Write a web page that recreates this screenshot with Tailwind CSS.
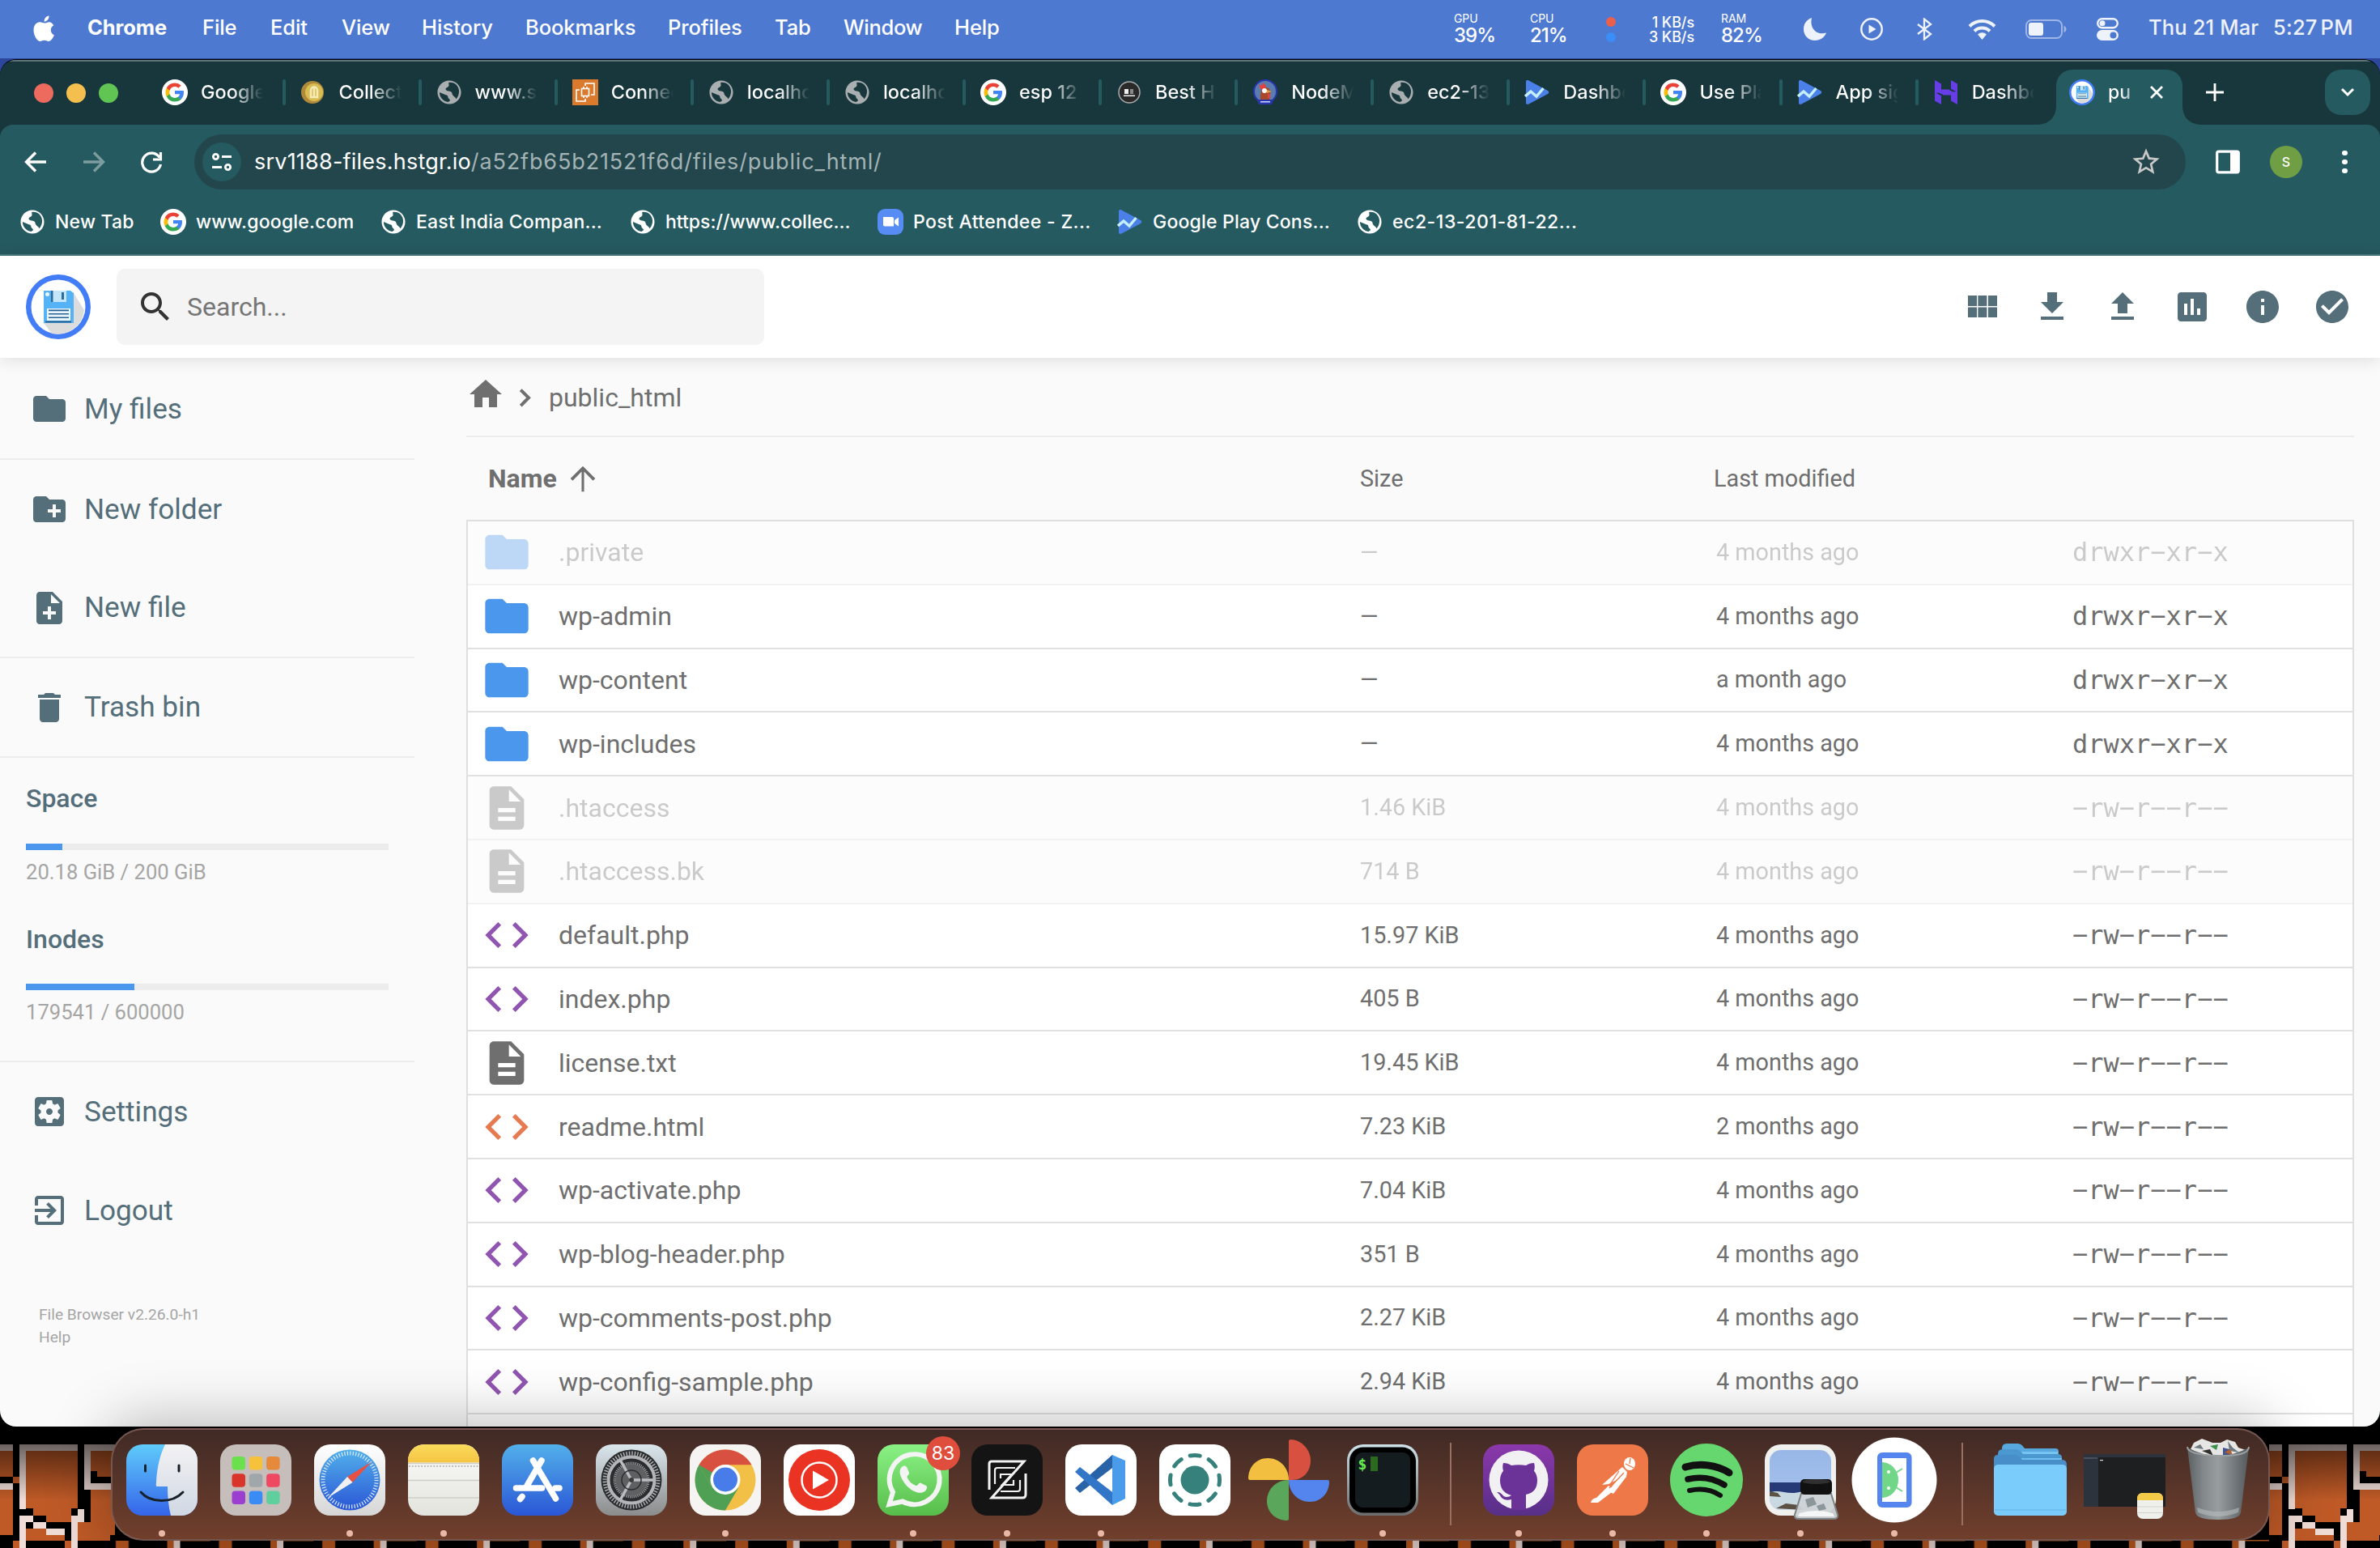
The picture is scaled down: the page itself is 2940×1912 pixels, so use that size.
<!DOCTYPE html>
<html lang="en">
<head>
<meta charset="utf-8">
<title>public_html</title>
<script src="https://cdn.jsdelivr.net/npm/@tailwindcss/browser@4"></script>
</head>
<body class="relative h-[1912px] w-[2940px] overflow-hidden bg-[#2c479c] font-[Inter,sans-serif] text-white">

<!-- shared icons -->
<svg class="absolute h-0 w-0" aria-hidden="true">
  <defs>
    <linearGradient id="gFinder" x1="0" y1="0" x2="0" y2="1"><stop offset="0" stop-color="#5fcbfa"/><stop offset="1" stop-color="#3565ea"/></linearGradient>
    <linearGradient id="gFinder2" x1="0" y1="0" x2="0" y2="1"><stop offset="0" stop-color="#f3f2f3"/><stop offset="1" stop-color="#d0d8e4"/></linearGradient>
    <linearGradient id="gBlue" x1="0" y1="0" x2="0" y2="1"><stop offset="0" stop-color="#52b0ea"/><stop offset="1" stop-color="#2a56d6"/></linearGradient>
    <linearGradient id="gWhite" x1="0" y1="0" x2="0" y2="1"><stop offset="0" stop-color="#ffffff"/><stop offset="1" stop-color="#d6d6d6"/></linearGradient>
    <linearGradient id="gPaper" x1="0" y1="0" x2="0" y2="1"><stop offset="0" stop-color="#fbfbfa"/><stop offset="1" stop-color="#e3e3dd"/></linearGradient>
    <linearGradient id="gYellow" x1="0" y1="0" x2="0" y2="1"><stop offset="0" stop-color="#f9db5c"/><stop offset="1" stop-color="#f6c443"/></linearGradient>
    <linearGradient id="gGear" x1="0" y1="0" x2="0" y2="1"><stop offset="0" stop-color="#dae6ed"/><stop offset="1" stop-color="#8b8c8c"/></linearGradient>
    <linearGradient id="gWa" x1="0" y1="0" x2="0" y2="1"><stop offset="0" stop-color="#8af285"/><stop offset="1" stop-color="#57bd4a"/></linearGradient>
    <linearGradient id="gGh" x1="0" y1="0" x2="0" y2="1"><stop offset="0" stop-color="#8b38ab"/><stop offset="1" stop-color="#572f88"/></linearGradient>
    <linearGradient id="gTerm" x1="0" y1="0" x2="0" y2="1"><stop offset="0" stop-color="#cfe2ea"/><stop offset="1" stop-color="#6d6d6d"/></linearGradient>
    <linearGradient id="gSky" x1="0" y1="0" x2="0" y2="1"><stop offset="0" stop-color="#98b7e6"/><stop offset="1" stop-color="#a9c3ef"/></linearGradient>
    <linearGradient id="gCan" x1="0" y1="0" x2="1" y2="0"><stop offset="0" stop-color="#5b6063"/><stop offset=".25" stop-color="#81878a"/><stop offset=".5" stop-color="#989da0"/><stop offset=".75" stop-color="#757b7e"/><stop offset="1" stop-color="#54595c"/></linearGradient>
    <linearGradient id="gShade" x1="0" y1="0" x2="0" y2="1"><stop offset="0" stop-color="#000" stop-opacity=".9"/><stop offset="1" stop-color="#000" stop-opacity="0"/></linearGradient>
  </defs>
  <symbol id="g" viewBox="0 0 32 32"><circle cx="16" cy="16" r="16" fill="#fff"/><g transform="translate(4 4)"><path fill="#4285f4" d="M23 12.27c0-.82-.07-1.6-.2-2.36H12v4.46h6.17a5.28 5.28 0 0 1-2.29 3.46v2.88h3.7c2.17-2 3.42-4.94 3.42-8.44z"/><path fill="#34a853" d="M12 23.5c3.1 0 5.7-1.03 7.6-2.78l-3.71-2.88c-1.03.69-2.34 1.1-3.89 1.1-2.99 0-5.52-2.02-6.42-4.73H1.75v2.97A11.5 11.5 0 0 0 12 23.5z"/><path fill="#fbbc05" d="M5.58 14.2a6.9 6.9 0 0 1 0-4.4V6.83H1.75a11.5 11.5 0 0 0 0 10.34z"/><path fill="#ea4335" d="M12 5.07c1.69 0 3.2.58 4.39 1.72l3.29-3.29A11.02 11.02 0 0 0 12 .5 11.5 11.5 0 0 0 1.75 6.83L5.58 9.8C6.48 7.09 9.01 5.07 12 5.07z"/></g></symbol>
  <symbol id="globe" viewBox="1 1 22 22"><path fill="currentColor" d="M12 2C6.48 2 2 6.48 2 12s4.48 10 10 10 10-4.48 10-10S17.52 2 12 2zm-1 18.2c-4.1-.49-7.3-3.9-7.3-8.2L9 14.2c1.400.2 1.900.8 1.900 2 0 1.400 1.800 1.500 1.800 2.800zm6.9-2.540c-.5-1.500-2.600-2.200-3.200-3.600-.4-1.100-.2-2.100-1.300-2.600-1.300-.6-2.700-.2-3.900-1.100-1.200-1-.3-2.300 1-2.700 1.500-.4 1.200-2 .9-3.900 4.700-.9 8.700 2.500 8.900 7.200 0 2.600-.8 4.800-2.400 6.700z" fill-rule="evenodd"/></symbol>
  <symbol id="play" viewBox="0 0 32 32"><path fill="#4a80e8" d="M2 3c0-2 2-2.500 3.500-1.500L29 14c1.700 1 1.700 3 0 4L5.500 30.500C4 31.500 2 31 2 29z"/><path fill="none" stroke="#c5f0fb" stroke-width="3.400" d="M1 21l7-6 7 6 8.500-10"/></symbol>
  <symbol id="floppy" viewBox="0 0 80 80"><circle cx="40" cy="40" r="40" fill="#427cf6"/><circle cx="40" cy="40" r="33.500" fill="#fff"/><path fill="#dcdcdc" d="M58.500 22L72 44a33 33 0 0 1-40 29L22 60z"/><path fill="#55b3f5" d="M22 20h33l4 3v37H22z"/><path fill="#c4e6fb" d="M33 20h17v14H33z"/><path fill="#2b6a9c" d="M44 22h3v9h-3zM31 20h2.500v14H31z"/><circle cx="26.500" cy="24.500" r="2.500" fill="#e8f6ff"/><path fill="#e9f5fc" d="M26 42h29v15H26z"/><path fill="#276192" d="M28 43.500h25v1.800H28zM28 48h25v1.600H28zM28 52.500h25v1.600H28zM24 57.500h32v2H24z"/></symbol>
  <symbol id="folder" viewBox="0 0 24 24"><path fill="currentColor" d="M10 4H4c-1.100 0-1.990.9-1.990 2L2 18c0 1.100.9 2 2 2h16c1.100 0 2-.9 2-2V8c0-1.100-.9-2-2-2h-8l-2-2z"/></symbol>
  <symbol id="newfolder" viewBox="0 0 24 24"><path fill="currentColor" d="M20 6h-8l-2-2H4c-1.110 0-1.990.89-1.990 2L2 18c0 1.110.89 2 2 2h16c1.110 0 2-.89 2-2V8c0-1.110-.89-2-2-2zm-1 8h-3v3h-2v-3h-3v-2h3V9h2v3h3v2z"/></symbol>
  <symbol id="newfile" viewBox="0 0 24 24"><path fill="currentColor" d="M14 2H6c-1.100 0-1.990.9-1.990 2L4 20c0 1.100.89 2 1.990 2H18c1.100 0 2-.9 2-2V8l-6-6zm2 14h-3v3h-2v-3H8v-2h3v-3h2v3h3v2zm-3-7V3.500L18.500 9H13z"/></symbol>
  <symbol id="trash" viewBox="0 0 24 24"><path fill="currentColor" d="M6 19c0 1.100.9 2 2 2h8c1.100 0 2-.9 2-2V7H6v12zM19 4h-3.500l-1-1h-5l-1 1H5v2h14V4z"/></symbol>
  <symbol id="settings" viewBox="0 0 24 24"><path fill="currentColor" d="M12 10c-1.100 0-2 .9-2 2s.9 2 2 2 2-.9 2-2-.9-2-2-2zm7-7H5c-1.110 0-2 .9-2 2v14c0 1.100.89 2 2 2h14c1.110 0 2-.9 2-2V5c0-1.100-.89-2-2-2zm-1.750 9c0 .23-.02.46-.05.68l1.480 1.160c.13.11.17.3.08.45l-1.400 2.420c-.09.15-.27.21-.43.150l-1.740-.7c-.36.28-.76.51-1.180.69l-.26 1.850c-.03.170-.18.3-.35.3h-2.800c-.17 0-.32-.13-.35-.29l-.26-1.850c-.43-.18-.82-.41-1.180-.69l-1.740.7c-.16.060-.34 0-.43-.15l-1.400-2.420c-.09-.15-.05-.34.08-.45l1.480-1.160c-.03-.23-.05-.46-.05-.69 0-.23.02-.46.05-.68l-1.480-1.160c-.13-.11-.17-.3-.08-.45l1.400-2.420c.09-.15.27-.21.43-.15l1.740.7c.36-.28.76-.51 1.180-.69l.26-1.850c.03-.17.18-.3.35-.3h2.800c.17 0 .32.13.35.29l.26 1.850c.43.18.82.41 1.180.69l1.740-.7c.16-.06.34 0 .43.15l1.400 2.420c.09.15.05.34-.08.45l-1.480 1.160c.03.230.05.460.05.690z"/></symbol>
  <symbol id="logout" viewBox="0 0 24 24"><path fill="currentColor" d="M10.090 15.590L11.500 17l5-5-5-5-1.410 1.410L12.670 11H3v2h9.670l-2.580 2.590zM19 3H5c-1.110 0-2 .9-2 2v4h2V5h14v14H5v-4H3v4c0 1.100.89 2 2 2h14c1.100 0 2-.9 2-2V5c0-1.100-.9-2-2-2z"/></symbol>
  <symbol id="doc" viewBox="0 0 24 24"><path fill="currentColor" d="M14 2H6c-1.100 0-1.990.9-1.990 2L4 20c0 1.100.89 2 1.990 2H18c1.100 0 2-.9 2-2V8l-6-6zm2 16H8v-2h8v2zm0-4H8v-2h8v2zm-3-5V3.500L18.500 9H13z"/></symbol>
  <symbol id="code" viewBox="0 0 24 24"><path fill="currentColor" d="M9.400 16.600L4.800 12l4.600-4.600L8 6l-6 6 6 6 1.400-1.400zm5.200 0l4.600-4.600-4.600-4.600L16 6l6 6-6 6-1.400-1.400z"/></symbol>
</svg>

<!-- wallpaper -->
<svg class="absolute bottom-0 left-0 h-[170px] w-[2940px]" viewBox="0 1742 2940 170">
  <defs>
    <g id="bricks" shape-rendering="crispEdges">
      <path fill="#000" d="M0 0h292v516H0z"/>
      <path fill="#bf5a27" d="M0 156h34v97H0zM66 156h132v214H66zM231 156h61v97h-61zM34 253h16v24H34zM0 300h34v167H0zM66 370h117v50H66zM231 300h61v190h-61zM66 444h117v46H66zM198 420h94v70h-94zM34 490h32v26H34zM166 490h16v26h-16z"/>
      <path fill="#efdcd6" d="M0 133h34v23H0zM50 133h148v23H66v216H50zM215 133h77v23h-61v144h-16zM0 277h34v23H0zM215 277h77v23h-77zM50 396h34v24h33v24h49v24h-49v-24H84v-24H66v96H50zM198 372h17v48h-17v96h-16V396h16z"/>
      <path fill="#000" d="M231 230h16v23h-16zM66 370h18v26H66zM84 396h33v24H84zM117 420h65v24h-65zM166 444h16v46h-16zM182 370h16v26h-16zM0 467h20v23H0zM280 467h12v23h-12z"/>
      <path fill="url(#gShade)" d="M0 0h292v340H0z"/>
    </g>
    <pattern id="strip" patternUnits="userSpaceOnUse" x="79" y="1900" width="127.540" height="12">
      <path fill="#000" d="M0 0h128v12H0z"/><path fill="#b4551f" d="M0 3h8v9H0zM64 3h16v9H64zM8 2h45v1.500H8z"/><path fill="#e3cfc9" d="M8 3h8v9H8z"/>
    </pattern>
  </defs>
  <path fill="#000" d="M0 1742h2940v170H0z"/>
  <path fill="url(#strip)" d="M130 1900h2680v12H130z"/>
  <use href="#bricks" transform="matrix(.4847 0 0 .3333 0 1740)"/>
  <use href="#bricks" transform="matrix(.4847 0 0 .3333 2803 1740)"/>
</svg>

<div class="relative flex h-[1912px] flex-col">
  <!-- menu bar -->
  <header class="flex h-[72px] shrink-0 items-center bg-[#4e79d1] pb-[3px] text-[25.5px] font-medium tracking-[-0.1px] whitespace-nowrap">
    <svg class="ml-[40px] h-[32px] w-[68px] shrink-0" viewBox="0 0 68 32"><path fill="#fff" d="M20.800 8.200c-2.300 0-4 1.400-5.600 1.400S11.300 8.300 9.300 8.300C5.300 8.300 1.500 11.800 1.500 18.200 1.500 25 6 32 9.500 32c1.900 0 2.900-1.200 5.300-1.200 2.400 0 3.100 1.200 5.200 1.200 3.200 0 5.900-4.800 6.800-7.700-5.200-2.300-5.300-9.500-.5-12-1.300-2.300-3.300-4.100-5.500-4.100zM20.500.5c-3.600.5-6.200 3.800-5.800 7.200 3.400 0 6.200-3.600 5.800-7.200z"/></svg>
    <span class="w-[142px] shrink-0 font-bold">Chrome</span><span class="w-[84px] shrink-0">File</span><span class="w-[88px] shrink-0">Edit</span><span class="w-[99px] shrink-0">View</span><span class="w-[128px] shrink-0 tracking-[0px]">History</span><span class="w-[176px] shrink-0">Bookmarks</span><span class="w-[132px] shrink-0">Profiles</span><span class="w-[85px] shrink-0">Tab</span><span class="w-[137px] shrink-0 tracking-[-0.3px]">Window</span><span class="shrink-0">Help</span>
    <div class="ml-auto flex items-center">
      <div class="w-[94px] leading-none"><div class="mt-[2px] text-[14px] font-normal">GPU</div><div class="mt-[2px] text-[24px] tracking-[-1px]">39%</div></div>
      <div class="w-[94px] leading-none"><div class="mt-[2px] text-[14px] font-normal">CPU</div><div class="mt-[2px] text-[24px] tracking-[-1px]">21%</div></div>
      <div class="mr-[30px] flex w-[12px] flex-col gap-[7px] pt-[3px]"><i class="h-[12px] w-[12px] rounded-full bg-[#ec5f4b]"></i><i class="h-[12px] w-[12px] rounded-full bg-[#3b8df8]"></i></div>
      <div class="mr-[33px] w-[67px] pt-[4px] text-right text-[18px] leading-[18px] font-medium tracking-[-0.1px]">1 KB/s<br>3 KB/s</div>
      <div class="w-[102px] leading-none"><div class="mt-[2px] text-[14px] font-normal">RAM</div><div class="mt-[2px] text-[24px] tracking-[-1px]">82%</div></div>
      <svg class="mt-[3px] h-[28px] w-[28px]" viewBox="0 0 28 28"><path fill="#eef2fb" d="M10 0C3 2.500 0 8 0 14c0 8 6 14 14 14 6.500 0 11.500-3.500 14-9.500C17 22 7 14 10 0z"/></svg>
      <svg class="mt-[3px] ml-[42px] h-[28px] w-[28px]" viewBox="0 0 28 28"><circle cx="14" cy="14" r="12.700" fill="none" stroke="#eef2fb" stroke-width="2.500"/><path fill="#eef2fb" d="M10.500 8.500l9 5.500-9 5.500z"/></svg>
      <svg class="mt-[3px] ml-[42px] h-[28px] w-[19px]" viewBox="0 0 19 28"><path fill="none" stroke="#eef2fb" stroke-width="2.300" d="M1 8l16 12-8 6.500v-25L17 8 1 20"/></svg>
      <svg class="mt-[3px] ml-[44px] h-[26px] w-[35px]" viewBox="0 0 35 26"><g fill="none" stroke="#eef2fb" stroke-width="4"><path d="M2 9.500a22 22 0 0 1 31 0M8 15.500a13.500 13.500 0 0 1 19 0"/></g><path fill="#eef2fb" d="M12 19.500a8 8 0 0 1 11 0L17.500 26z"/></svg>
      <svg class="mt-[3px] ml-[36px] h-[24px] w-[51px]" viewBox="0 0 51 24"><rect x="1" y="1" width="44" height="22" rx="6.500" fill="none" stroke="#9fb5e6" stroke-width="2"/><rect x="4" y="4" width="18" height="16" rx="3" fill="#eef2fb"/><path fill="#9fb5e6" d="M47.500 8c4 1 4 7 0 8z"/></svg>
      <svg class="mt-[3px] ml-[37px] h-[28px] w-[27px]" viewBox="0 0 27 28"><rect x="1.200" y="1.200" width="24.600" height="11" rx="5.500" fill="none" stroke="#eef2fb" stroke-width="2.400"/><circle cx="7" cy="6.700" r="3.500" fill="#eef2fb"/><rect x="0" y="15" width="27" height="13" rx="6.500" fill="#eef2fb"/><circle cx="20.500" cy="21.500" r="4" fill="#4e79d1"/></svg>
      <span class="ml-[37px] w-[154px] tracking-[0.15px] text-[#eef2fb]">Thu 21 Mar</span><span class="w-[132px] tracking-[0.2px] text-[#eef2fb]">5:27<span class="ml-[4px]">PM</span></span>
    </div>
  </header>

  <!-- browser window -->
  <main class="mt-[1px] flex h-[1689px] flex-col overflow-hidden rounded-[20px] border-t border-black bg-[#18373c]">
    <div class="h-[2px] shrink-0 bg-[#5d7578]"></div>
    <!-- tab strip -->
    <div class="flex h-[78px] shrink-0 items-center pb-[2px]">
      <div class="mt-[2px] flex w-[182px] shrink-0 gap-[16px] pl-[42px]"><i class="h-[24px] w-[24px] rounded-full bg-[#ec6a5e]"></i><i class="h-[24px] w-[24px] rounded-full bg-[#f4bf4f]"></i><i class="h-[24px] w-[24px] rounded-full bg-[#61c554]"></i></div>
      <div id="tabs" class="flex w-[2356px] shrink-0"></div>
      <div class="relative mt-[12px] ml-[2px] flex h-[68px] w-[156px] shrink-0 items-center rounded-t-[20px] bg-[#255a60] pb-[12px] pl-[16px]">
        <svg class="absolute bottom-0 left-[-24px] h-[24px] w-[24px]" viewBox="0 0 24 24"><path fill="#255a60" d="M24 0v24H0C15 24 24 15 24 0z"/></svg>
        <svg class="absolute right-[-24px] bottom-0 h-[24px] w-[24px]" viewBox="0 0 24 24"><path fill="#255a60" d="M0 0v24h24C9 24 0 15 0 0z"/></svg>
        <svg class="h-[32px] w-[32px]"><use href="#floppy"/></svg>
        <span class="ml-[16px] w-[30px] bg-gradient-to-r from-white from-50% to-white/50 bg-clip-text text-[23px] font-medium text-transparent">pu</span>
        <svg class="ml-[22px] h-[16px] w-[16px]" viewBox="0 0 16 16"><path stroke="#fff" stroke-width="2.800" d="M1 1l14 14M15 1L1 15"/></svg>
      </div>
      <svg class="ml-[29px] h-[22px] w-[22px]" viewBox="0 0 22 22"><path stroke="#fff" stroke-width="2.800" d="M11 0v22M0 11h22"/></svg>
      <div class="mr-[12px] ml-auto flex h-[56px] w-[56px] items-center justify-center rounded-[20px] bg-[#255a60]"><svg class="h-[12px] w-[18px]" viewBox="0 0 18 12"><path fill="none" stroke="#fff" stroke-width="3" d="M2 2l7 7 7-7"/></svg></div>
    </div>

    <div class="flex h-[162px] shrink-0 flex-col rounded-t-[16px] border-b-2 border-[#4d7b80] bg-[#255a60]">
      <!-- address row -->
      <div class="flex h-[92px] items-center">
        <svg class="ml-[30px] h-[28px] w-[28px] shrink-0" viewBox="0 0 28 28"><path fill="none" stroke="#fff" stroke-width="3.400" d="M27 14H3M14 2.500L2.500 14 14 25.500"/></svg>
        <svg class="ml-[44px] h-[28px] w-[28px] shrink-0" viewBox="0 0 28 28"><path fill="none" stroke="#7c9c9f" stroke-width="3.400" d="M1 14h24M14 2.500L25.500 14 14 25.500"/></svg>
        <svg class="ml-[43px] h-[28px] w-[28px] shrink-0" viewBox="0 0 28 28"><path fill="none" stroke="#fff" stroke-width="3.200" d="M24 8.500A11.500 11.500 0 1 0 25.500 17M25.500 2v9H16"/></svg>
        <div class="ml-[39px] flex h-[68px] w-[2460px] shrink-0 items-center rounded-full bg-[#22464b] pl-[10px]">
          <div class="flex h-[48px] w-[48px] items-center justify-center rounded-full bg-[#255a60]"><svg class="h-[22px] w-[24px]" viewBox="0 0 24 22"><g fill="none" stroke="#fff" stroke-width="2.800"><circle cx="4.500" cy="4.500" r="3.100"/><circle cx="19.500" cy="17.500" r="3.100"/><path d="M12 4.500h12M0 17.500h12"/></g></svg></div>
          <span class="ml-[16px] text-[27px] tracking-[0.22px] whitespace-nowrap text-white">srv1188-files.hstgr.io<span class="tracking-[0.87px] text-[#a3b3b5]">/a52fb65b21521f6d/files/public_html/</span></span>
          <svg class="mr-[29px] ml-auto h-[40px] w-[40px]" viewBox="0 0 24 24"><path fill="#c8c8c8" d="M22 9.240l-7.190-.62L12 2 9.190 8.630 2 9.240l5.460 4.730L5.820 21 12 17.270 18.180 21l-1.630-7.030L22 9.240zM12 15.400l-3.760 2.270 1-4.280-3.320-2.880 4.380-.38L12 6.100l1.710 4.040 4.380.38-3.320 2.880 1 4.280L12 15.400z"/></svg>
        </div>
        <svg class="ml-[37px] h-[30px] w-[30px]" viewBox="0 0 30 30"><rect x="1.700" y="2.200" width="26.600" height="25.600" rx="2" fill="none" stroke="#fff" stroke-width="3.200"/><path fill="#fff" d="M18 2h10v26H18z"/></svg>
        <div class="ml-[37px] flex h-[40px] w-[40px] items-center justify-center rounded-full bg-[#709e45] text-[16px] font-medium">S</div>
        <div class="ml-[49px] flex flex-col gap-[4.500px]"><i class="h-[6.500px] w-[6.500px] rounded-full bg-white"></i><i class="h-[6.500px] w-[6.500px] rounded-full bg-white"></i><i class="h-[6.500px] w-[6.500px] rounded-full bg-white"></i></div>
      </div>
      <!-- bookmarks -->
      <div class="flex h-[56px] items-center pl-[24px] text-[23px] font-medium tracking-[0.2px] whitespace-nowrap">
        <div class="flex w-[174px] shrink-0 items-center gap-[12px]"><svg class="h-[32px] w-[32px]"><use href="#globe"/></svg>New Tab</div>
        <div class="flex w-[272px] shrink-0 items-center gap-[12px]"><svg class="h-[32px] w-[32px]"><use href="#g"/></svg>www.google.com</div>
        <div class="flex w-[308px] shrink-0 items-center gap-[12px]"><svg class="h-[32px] w-[32px]"><use href="#globe"/></svg>East India Compan...</div>
        <div class="flex w-[306px] shrink-0 items-center gap-[12px] tracking-[0px]"><svg class="h-[32px] w-[32px]"><use href="#globe"/></svg>https://www.collec...</div>
        <div class="flex w-[296px] shrink-0 items-center gap-[12px] tracking-[0.35px]"><svg class="h-[32px] w-[32px]" viewBox="0 0 32 32"><rect width="32" height="32" rx="9" fill="#568cf3"/><path fill="#fff" d="M7 10h11c1.500 0 2 1 2 2v9.500H9c-1.500 0-2-1-2-2zM21 14l5-3.500v11L21 18z"/></svg>Post Attendee - Z...</div>
        <div class="flex w-[296px] shrink-0 items-center gap-[12px]"><svg class="h-[32px] w-[32px]"><use href="#play"/></svg>Google Play Cons...</div>
        <div class="flex shrink-0 items-center gap-[12px] tracking-[0.55px]"><svg class="h-[32px] w-[32px]"><use href="#globe"/></svg>ec2-13-201-81-22...</div>
      </div>
    </div>

    <!-- file browser page -->
    <div class="flex min-h-0 grow flex-col bg-[#fafafa] font-[Roboto,sans-serif] text-[#6f6f6f]">
      <div class="z-10 flex h-[126px] shrink-0 items-center bg-white pr-[35px] pl-[32px] text-[#546e7a] shadow-[0_2px_20px_rgba(0,0,0,0.12)]">
        <svg class="h-[80px] w-[80px]"><use href="#floppy"/></svg>
        <div class="ml-[32px] flex h-[94px] w-[800px] items-center gap-[16px] rounded-[10px] bg-[#f4f4f4] pl-[24px] text-[32px] text-[#757575]"><svg class="h-[48px] w-[48px] text-[#333]" viewBox="0 0 24 24"><path fill="currentColor" d="M15.500 14h-.79l-.28-.27C15.410 12.590 16 11.110 16 9.500 16 5.910 13.090 3 9.500 3S3 5.910 3 9.500 5.910 16 9.500 16c1.610 0 3.090-.59 4.230-1.570l.27.28v.79l5 4.990L20.490 19l-4.990-5zm-6 0C7.010 14 5 11.990 5 9.500S7.010 5 9.500 5 14 7.010 14 9.500 11.990 14 9.500 14z"/></svg><span class="-ml-px">Search...</span></div>
        <div class="ml-auto flex gap-[38.4px]">
          <svg class="h-[48px] w-[48px]" viewBox="0 0 24 24"><path fill="currentColor" d="M3 11.500h5.500V5H3v6.500zm0 7h5.500V12.200H3v6.300zm6.200 0h5.500V12.200H9.200v6.300zm6.300 0H21V12.200h-5.500v6.300zM9.200 11.500h5.500V5H9.200v6.500zM15.500 5v6.500H21V5h-5.500z"/></svg>
          <svg class="h-[48px] w-[48px]" viewBox="0 0 24 24"><path fill="currentColor" d="M19 9h-4V3H9v6H5l7 7 7-7zM5 18v2h14v-2H5z"/></svg>
          <svg class="h-[48px] w-[48px]" viewBox="0 0 24 24"><path fill="currentColor" d="M9 16h6v-6h4l-7-7-7 7h4zm-4 2h14v2H5z"/></svg>
          <svg class="h-[48px] w-[48px]" viewBox="0 0 24 24"><path fill="currentColor" d="M19 3H5c-1.100 0-2 .9-2 2v14c0 1.100.9 2 2 2h14c1.100 0 2-.9 2-2V5c0-1.100-.9-2-2-2zM9 17H7v-7h2v7zm4 0h-2V7h2v10zm4 0h-2v-4h2v4z"/></svg>
          <svg class="h-[48px] w-[48px]" viewBox="0 0 24 24"><path fill="currentColor" d="M12 2C6.480 2 2 6.480 2 12s4.480 10 10 10 10-4.480 10-10S17.520 2 12 2zm1 15h-2v-6h2v6zm0-8h-2V7h2v2z"/></svg>
          <svg class="h-[48px] w-[48px]" viewBox="0 0 24 24"><path fill="currentColor" d="M12 2C6.480 2 2 6.480 2 12s4.480 10 10 10 10-4.480 10-10S17.520 2 12 2zm-2 15l-5-5 1.410-1.410L10 14.170l7.590-7.590L19 8l-9 9z"/></svg>
        </div>
      </div>

      <div class="flex min-h-0 grow overflow-hidden">
        <!-- sidebar -->
        <nav class="w-[512px] shrink-0 pt-[2px] text-[35.2px] text-[#546e7a]">
          <div class="flex h-[122px] items-center gap-[19px] pl-[37px]"><svg class="h-[48px] w-[48px]"><use href="#folder"/></svg>My files</div>
          <div class="border-t-2 border-[#ececec]">
            <div class="flex h-[122px] items-center gap-[19px] pl-[37px]"><svg class="h-[48px] w-[48px]"><use href="#newfolder"/></svg>New folder</div>
            <div class="flex h-[121px] items-center gap-[19px] pl-[37px]"><svg class="h-[48px] w-[48px]"><use href="#newfile"/></svg>New file</div>
          </div>
          <div class="flex h-[123px] items-center gap-[19px] border-t-2 border-[#ececec] pl-[37px]"><svg class="h-[48px] w-[48px]"><use href="#trash"/></svg>Trash bin</div>
          <div class="h-[376px] border-t-2 border-[#ececec] pt-[30px] pl-[32px]">
            <div class="text-[32px] leading-[40px] font-medium">Space</div>
            <div class="mt-[36px] h-[8px] w-[448px] bg-[#ececec]"><div class="h-full bg-[#4a97ed]" style="width:10.09%"></div></div>
            <div class="mt-[10px] text-[25.600px] leading-[34px] text-[#a5a5a5]">20.18 GiB / 200 GiB</div>
            <div class="mt-[46px] text-[32px] leading-[40px] font-medium">Inodes</div>
            <div class="mt-[35px] h-[8px] w-[448px] bg-[#ececec]"><div class="h-full bg-[#4a97ed]" style="width:29.92%"></div></div>
            <div class="mt-[10px] text-[25.600px] leading-[34px] text-[#a5a5a5]">179541 / 600000</div>
          </div>
          <div class="border-t-2 border-[#ececec]">
            <div class="flex h-[122px] items-center gap-[19px] pl-[37px]"><svg class="h-[48px] w-[48px]"><use href="#settings"/></svg>Settings</div>
            <div class="flex h-[122px] items-center gap-[19px] pl-[37px]"><svg class="h-[48px] w-[48px]"><use href="#logout"/></svg>Logout</div>
          </div>
          <div class="mt-[54px] pl-[48px] text-[19.200px] leading-[28px] text-[#a5a5a5]">File Browser v2.26.0-h1<br>Help</div>
        </nav>

        <!-- listing -->
        <section class="ml-[64px] w-[2332px] shrink-0">
          <div class="flex h-[98px] items-center border-b-2 border-[#ececec]">
            <svg class="mb-[6px] h-[48px] w-[48px]" viewBox="0 0 24 24"><path fill="currentColor" d="M10 20v-6h4v6h5v-8h3L12 3 2 12h3v8z"/></svg>
            <svg class="mt-[2px] ml-[4px] h-[40px] w-[40px]" viewBox="0 0 24 24"><path fill="currentColor" d="M10 5.500L8.300 7.200l5 5-5 5L10 18.900l6.700-6.700z"/></svg>
            <span class="mt-[2px] ml-[10px] text-[32px]">public_html</span>
          </div>
          <div class="flex h-[104px] items-center border-b-2 border-[#dfdfdf] text-[28.800px]">
            <span class="w-[130px] pl-[27px] text-[32px] font-bold">Name</span>
            <svg class="h-[46px] w-[46px] -translate-x-[9px]" viewBox="0 0 24 24"><path fill="currentColor" d="M4 12l1.410 1.410L11.200 7.630V20.500h1.600V7.630l5.780 5.790L20 12l-8-8-8 8z"/></svg>
            <span class="mt-px ml-[928px] w-[437px]">Size</span>
            <span class="mt-px">Last modified</span>
          </div>
          <div id="rows" class="border-x-2 border-[#dfdfdf] bg-white"></div>
        </section>
      </div>
    </div>
  </main>
</div>

<!-- dock -->
<div class="absolute top-[1764px] left-[137px] flex h-[139px] w-[2667px] rounded-[40px] border-2 border-[#80605a]/80 bg-gradient-to-b from-[#402a25] to-[#713f2c] px-[3px] shadow-[0_0_70px_10px_rgba(0,0,0,0.26)]" id="dock">
</div>

<script>
const tabs = [
  ['g', 'Google'], ['coin', 'Collect'], ['globe', 'www.s'], ['ec2', 'Connec'], ['globe', 'localho'], ['globe', 'localho'], ['g', 'esp 12'],
  ['best', 'Best H'], ['hen', 'NodeM'], ['globe', 'ec2-13'], ['play', 'Dashbo'], ['g', 'Use Pla'], ['play', 'App sig'], ['host', 'Dashbo']
];
const fav = {
  g: '<use href="#g"/>', play: '<use href="#play"/>', globe: '<use href="#globe" color="#a9afb1"/>',
  coin: '<circle cx="15" cy="16" r="14" fill="#b08a3a"/><circle cx="17" cy="16" r="11" fill="#d8bd55"/><path fill="none" stroke="#f6ebb5" stroke-width="2.500" d="M13 14c0-6 8-6 8 0v8h-8zM17 9v14"/>',
  ec2: '<path fill="#db7a2c" d="M0 0h32v32H0z"/><g fill="none" stroke="#fff" stroke-width="1.600"><rect x="11.500" y="11.500" width="9" height="9"/><path d="M16 8V5h11v14h-4M9 13H5v14h11v-3M14 9v2M18 9v2M14 21v2M18 21v2"/></g>',
  best: '<circle cx="16" cy="16" r="13" fill="#2a2a2a" stroke="#aaa" stroke-width="1.500"/><path fill="#eee" d="M10 12h5v6h-5zM9 19.500h14V21H9z"/><path fill="#888" d="M17 12h4v6h-4z"/>',
  hen: '<circle cx="16" cy="15" r="14" fill="#5a7cae" stroke="#2a35b0" stroke-width="2"/><path fill="#a8492b" d="M10 26c0-8 0-16 6-16s7 5 6 9l-1 7H10z"/><path fill="#e8413c" d="M8 6l4 2 1-4 4 4-2 5-5-1zM19 18h3v5h-3z"/><circle cx="15" cy="14" r="3" fill="#fff"/><path fill="#e9a23b" d="M18 13l6 2-6 2z"/><path fill="#2a35b0" d="M6 25h20l-2 6H8z"/><path fill="#c9d6ff" d="M10 27h12v1.500H10z"/>',
  host: '<path fill="#673de6" d="M2 1l8 4.500v7h9l8 4.300H2zM22 1l8 4.500v10.500l-8-4.300zM30 31l-8-4.500v-7h-9L4.500 15.300H30zM10 31l-8-4.500V16l8 4.300z"/>'
};
document.getElementById('tabs').innerHTML = tabs.map(([i, t], k) =>
  `<div class="flex ${k ? 'w-[168.1px]' : 'w-[170.5px]'} shrink-0 items-center pl-[18px]"><svg class="h-[32px] w-[32px] shrink-0" viewBox="0 0 32 32">${fav[i]}</svg><span class="ml-[16px] w-[77px] shrink-0 bg-gradient-to-r from-white from-50% to-white/0 bg-clip-text text-[23.5px] font-medium whitespace-nowrap text-transparent">${t}</span>${k < 13 ? '<i class="ml-auto h-[32px] w-[4px] rounded-full bg-[#255a60]"></i>' : ''}</div>`).join('');

const dir = 'drwxr−xr−x', file = '−rw−r−−r−−', m4 = '4 months ago';
const blue = 'text-[#4a97ed]', grey = 'text-[#6f6f6f]', purple = 'text-[#9055b0]', orange = 'text-[#e67a50]';
const rows = [
  ['.private', '—', m4, dir, 'folder', blue, 1], ['wp-admin', '—', m4, dir, 'folder', blue], ['wp-content', '—', 'a month ago', dir, 'folder', blue], ['wp-includes', '—', m4, dir, 'folder', blue],
  ['.htaccess', '1.46 KiB', m4, file, 'doc', grey, 1], ['.htaccess.bk', '714 B', m4, file, 'doc', grey, 1],
  ['default.php', '15.97 KiB', m4, file, 'code', purple], ['index.php', '405 B', m4, file, 'code', purple], ['license.txt', '19.45 KiB', m4, file, 'doc', grey],
  ['readme.html', '7.23 KiB', '2 months ago', file, 'code', orange], ['wp-activate.php', '7.04 KiB', m4, file, 'code', purple], ['wp-blog-header.php', '351 B', m4, file, 'code', purple],
  ['wp-comments-post.php', '2.27 KiB', m4, file, 'code', purple], ['wp-config-sample.php', '2.94 KiB', m4, file, 'code', purple], ['', '', '', '', 'folder', 'invisible']
];
document.getElementById('rows').innerHTML = rows.map(([n, s, d, p, i, c, hid]) =>
  `<div class="${hid ? 'bg-[#fcfcfc]' : 'bg-white'}"><div class="flex h-[78.8px] items-center border-b-2 border-[#e0e0e0] text-[28.8px] whitespace-nowrap ${hid ? 'opacity-35' : ''}"><svg class="ml-[16px] h-[64px] w-[64px] shrink-0 ${c}"><use href="#${i}"/></svg><span class="ml-[32px] w-[990px] text-[32px]">${n}</span><span class="w-[440px]">${s}</span><span class="w-[440px]">${d}</span><span class="font-['DejaVu_Sans_Mono',monospace] text-[32px]">${p}</span></div></div>`).join('');

const sq = f => `<rect width="88" height="88" rx="20" fill="${f}"/>`;
const ticks = (r, w, d, c) => `<circle cx="44" cy="44" r="${r}" fill="none" stroke="${c}" stroke-width="${w}" stroke-dasharray="${d}"/>`;
const art = {
  finder: sq('url(#gFinder)') + '<path fill="url(#gFinder2)" d="M48 0h20a20 20 0 0 1 20 20v48a20 20 0 0 1-20 20H55c-3-12-4-24-4-36H38c-2 0-1-4-1-6C38 28 42 12 48 0z"/><path fill="none" stroke="#17212b" stroke-width="3" stroke-linecap="round" d="M18 59c12 14 39 14 52 0M23.500 26v7M65 26v7"/>',
  launch: sq('#c6bebb') + [['#6be04d', '#f6c23c', '#e6893a'], ['#d9352a', '#9fa7aa', '#ee4961'], ['#9a3fd0', '#3b8bf5', '#5fcf9e']].map((r, y) => r.map((c, x) => `<rect x="${14.5 + x * 21.3}" y="${15 + y * 21.300}" width="16.500" height="16.500" rx="4" fill="${c}"/>`).join('')).join(''),
  safari: sq('url(#gWhite)') + '<circle cx="44" cy="44" r="37.500" fill="url(#gBlue)"/>' + ticks(33, 5, '1.2 2.256', '#dcebfa') + '<path fill="#e8503f" d="M71 21.500L41 40l6.500 7z"/><path fill="#f1f1f1" d="M17 66l24-26 6.500 7z"/>',
  notes: sq('url(#gPaper)') + '<path fill="url(#gYellow)" d="M20 0h48a20 20 0 0 1 20 20v2.500H0V20A20 20 0 0 1 20 0z"/><path stroke="#cfcfca" stroke-width="1.500" d="M0 23.500h88M0 44.500h88M0 66h88"/><path stroke="#b9b9b5" stroke-width="2" stroke-dasharray="1.800 2" d="M1 27h86"/>',
  store: sq('url(#gBlue)') + '<g fill="none" stroke="#fff" stroke-width="7.500" stroke-linecap="round"><path d="M49 20L31 51M38.500 20L66.500 67M17.500 54h32M66 54h5M25 64.500l-2.500 3"/></g>',
  gear: sq('url(#gGear)') + '<circle cx="44" cy="44" r="37.500" fill="#2b2c2d"/>' + ticks(33, 5, '1.500 1.956', '#a9adaf') + '<circle cx="44" cy="44" r="28.500" fill="none" stroke="#b2b6b8" stroke-width="4"/><circle cx="44" cy="44" r="20" fill="#5e6061"/>' + ticks(21, 3, '1.200 1.200', '#9a9d9f') + '<path stroke="#b9bdbf" stroke-width="3.500" d="M44 44h27M44 44L30.500 20M44 44L30.500 68"/><circle cx="44" cy="44" r="12" fill="none" stroke="#2b2c2d" stroke-width="1.500"/><circle cx="44" cy="44" r="3" fill="#3a3b3c"/>',
  chrome: sq('#f6f4f3') + '<circle cx="44" cy="44" r="37.500" fill="#f2bf47"/><path fill="#d8503f" d="M11.500 25.300a37.500 37.500 0 0 1 65 0H44L28 53z"/><path fill="#4f9f55" d="M11.500 25.300A37.500 37.500 0 0 0 44 81.500L60.200 53.400 27.800 53.400z"/><path fill="#4f9f55" d="M11.500 25.300L27.800 53.400 44 44z"/><circle cx="44" cy="43.500" r="18.500" fill="#fff"/><circle cx="44" cy="43.500" r="15" fill="#477ce9"/>',
  yt: sq('#fff') + '<circle cx="44" cy="44" r="38" fill="#ea3323"/><circle cx="44" cy="44" r="21.500" fill="none" stroke="#fff" stroke-width="2.500"/><path fill="#fff" d="M36 32.500l20 11.500-20 11.500z"/>',
  wa: sq('url(#gWa)') + '<path fill="none" stroke="#f4f4f4" stroke-width="6" d="M14.500 74l4.500-15A31 31 0 1 1 31 70.500z"/><path fill="#f4f4f4" d="M31 27c3-1.500 5 0 6 3l2 5c.5 2-3 4-2.500 5.500 2 5 6 8.500 11 10.500 2 .5 3.500-4 5.500-3.500l7 3.500c2 1 1 4.500-1 6.500-6 5-15 1-21-4.500C31 46.500 23 33 31 27z"/>',
  zed: sq('#141414') + '<g fill="none" stroke="#f2f2f2" stroke-width="3"><path d="M22 56V24q0-3 3-3h40L25 66h38q4 0 4-4V36"/><path d="M29 49V32q0-3 3-3h22M36 58h21q3 0 3-3V44M36 42v-5h14L38 50h14v-6" stroke-width="2.200"/></g>',
  vsc: sq('#fff') + '<path fill="#2863a8" d="M58 13L12 54l6 6 44-34z"/><path fill="#3276c8" d="M12 34l6-6 44 34-4 13z"/><path fill="#4a9bea" d="M58 13l16 7v47l-16 8z"/><path fill="#fff" d="M58 31v26L41 44z"/>',
  open: sq('#fff') + '<circle cx="44" cy="44" r="17.500" fill="#37817d"/><circle cx="44" cy="44" r="30.500" fill="none" stroke="#37817d" stroke-width="5" stroke-linecap="round" stroke-dasharray="12 11.950" stroke-dashoffset="6"/>',
  photos: '<path fill="#d8503f" d="M44-4v48h4c14 0 23-11 23-24S60-6 46-6q-2 0-2 2z"/><path fill="#f2bf40" d="M-6 42C-6 28 4 17 18 17s26 11 26 27H-4q-2 0-2-2z"/><path fill="#5484ee" d="M94 46C94 60 84 71 70 71S44 60 44 44h48q2 0 2 2z"/><path fill="#5aa65b" d="M42 94C28 94 17 84 17 70s11-26 27-26v48q0 2-2 2z"/>',
  term: sq('url(#gTerm)') + '<rect x="3" y="3.500" width="82" height="81" rx="17" fill="#000"/><rect x="10" y="10" width="68" height="68" rx="9" fill="#151c1f"/><path fill="#2c6a20" d="M29 15h9v18h-9z"/><text x="13.500" y="31" font-family="DejaVu Sans Mono, monospace" font-size="18" font-weight="bold" fill="#67ea50">$</text>',
  gh: sq('url(#gGh)') + '<circle cx="44" cy="44" r="36.500" fill="#f1f1f4"/><path fill="#6b3398" d="M35 81V68c-8 2-12-1-14-5-1-2-3-3-4-4 6-1 7 6 12 6 3 0 4-1 6-2C25 60 21 54 21 44c0-5 2-9 4-11-1-4-1-7 0-10 4 0 7 1 10 3 6-1 12-1 18 0 3-2 6-3 10-3 1 3 1 6 0 10 2 2 4 6 4 11 0 10-4 16-14 18v19z"/>',
  post: sq('#ee7848') + '<g fill="#fff"><ellipse cx="65" cy="24" rx="7" ry="8"/><path d="M56 28l6 6-1 6-16 21-6-3 10-14-10 5-8 1z"/><path d="M39 51l8 5-21 16h-9q1-5 7-6z"/></g><path stroke="#ee7848" stroke-width="1.300" d="M60 24l10 5M65 24l1-7M52 33l-12 18M58 35L40 54"/>',
  spot: '<circle cx="44" cy="44" r="45" fill="#66d66e"/><g fill="none" stroke="#111" stroke-linecap="round"><path stroke-width="9" d="M18 28c18-5 38-3 54 7"/><path stroke-width="7.500" d="M21 43c16-4 30-2 45 7"/><path stroke-width="6" d="M23 57c13-3 26-2 38 6"/></g>',
  prev: sq('#f0f0ee') + '<rect x="6" y="7" width="76" height="74" rx="14" fill="url(#gSky)"/><path fill="#273a78" d="M6 47h76v14H6z"/><path fill="#c9d9e2" d="M6 60c12-6 22 4 40-2l36-2v12a14 14 0 0 1-14 13H20A14 14 0 0 1 6 68z"/><path fill="#5c5145" d="M6 58l10 2 4 5-14-1zM14 79l12-6 16 2 6 6z"/><path fill="#cdd3d6" fill-opacity=".95" stroke="#7c8286" stroke-width="2" d="M45 61h37l8 26q1 5-5 5H42q-6 0-5-5z"/><path fill="#8c979c" d="M50 68l10-3 4 9-11 4zM64 76l9-3 3 7-9 2z"/><path fill="#f5f6f6" d="M43 85q20-6 41 0l2 4H41z"/><rect x="44" y="43" width="39" height="19" rx="5" fill="#111"/><ellipse cx="63.500" cy="46" rx="17" ry="3" fill="#303030"/>',
  droid: '<circle cx="44" cy="44" r="52.500" fill="#fff"/><rect x="23" y="10" width="42.500" height="68" rx="6" fill="#5585ee"/><path fill="#fff" d="M29 17h30v54H29z"/><path fill="#71d688" d="M29 22a20 22 0 0 1 0 44z"/><path stroke="#71d688" stroke-width="2" d="M46 35l8-5M46 53l8 5"/><circle cx="37" cy="34" r="2" fill="#fff"/><circle cx="37" cy="54" r="2" fill="#fff"/>',
  dir: '<path fill="#57a8dc" d="M9 5q0-6 6-6h14q4 0 8 6h38q4 0 4 4v70H9z"/><path fill="#78c4f0" d="M10 9h68v12H10z"/><path fill="#4b97d0" d="M4 12q0-6 6-6h16q5 0 9 6h43q5 0 5 4v60H4z"/><path fill="#6fbeee" d="M4 17h79v10H4z"/><path fill="#488fc9" d="M-1 18q0-5 5-5h21q5 0 9 6h49q6 0 6 6v50H-1z"/><rect x="-1" y="25" width="90" height="63" rx="5" fill="#7accfb"/><path stroke="#63b4e6" stroke-width="1.200" d="M0 81h88"/>',
  win: '<path fill="#1e1f20" d="M-6 12h101v65H-6z"/><path fill="#2c333d" d="M-6 12h101v4H-6zM-6 16h18v61H-6z"/><path fill="#47505c" d="M-6 16h17v2H-6z"/><path fill="#ddd" d="M14 19h4v1.200h-4z"/><rect x="60" y="60" width="32" height="32" rx="7" fill="#efefeb"/><path fill="#f5ca49" d="M67 60h18q7 0 7 7v2H60v-2q0-7 7-7z"/><path stroke="#d2d2ce" d="M60 77h32M60 84.500h32"/>',
  bin: '<path fill="#e6e6e4" d="M10 6l4-8 10-5 8 3 5 2 10 0 8-4 10 3 4 7 9 3 2 6-32 10z"/><path fill="#6f7a80" d="M14 4l8-4 4 6zM56-4l6 8 8 6-12-2z"/><path fill="#332f2d" d="M24 8l10-2 4 8z"/><path fill="#3d8f4c" d="M34 2l10-2-2 7z"/><path fill="#43558c" d="M50 4l8 2 2 8-10-1z"/><path fill="#b5602f" d="M52 10l7-4 3 7z"/><path fill="url(#gCan)" d="M6 4q38 20 76 0L72 84q-1 9-28 9t-28-9z"/><path fill="none" stroke="#9a9fa2" stroke-width="2" d="M6 3q0 10 38 11T82 3"/><path fill="#b7bcbe" fill-opacity=".6" d="M18 78q26 10 52 0l-1 6q-25 10-50 0z"/>'
};
const slot = ([k, dot]) => `<div class="relative flex w-[116px] shrink-0 flex-col items-center pt-[18px]"><svg class="h-[88px] w-[88px] overflow-visible" viewBox="0 0 88 88">${art[k]}</svg>${dot ? '<i class="mt-[18px] h-[8px] w-[8px] rounded-full bg-[#eab9a6]"></i>' : ''}${k === 'wa' ? '<b class="absolute top-[8px] right-[0px] flex h-[42px] w-[42px] items-center justify-center rounded-full bg-[#df4d3c] text-[23px] font-normal">83</b>' : ''}</div>`;
const sep = '<div class="flex w-[52px] shrink-0 justify-center pt-[16px]"><i class="h-[102px] w-[2px] bg-[#9a6f61]"></i></div>';
const g1 = [['finder', 1], ['launch'], ['safari', 1], ['notes', 1], ['store'], ['gear'], ['chrome', 1], ['yt'], ['wa', 1], ['zed', 1], ['vsc', 1], ['open'], ['photos'], ['term', 1]];
const g2 = [['gh', 1], ['post', 1], ['spot', 1], ['prev', 1], ['droid', 1]];
const g3 = [['dir'], ['win'], ['bin']];
document.getElementById('dock').innerHTML = g1.map(slot).join('') + sep + g2.map(slot).join('') + sep + g3.map(slot).join('');
</script>
</body>
</html>
